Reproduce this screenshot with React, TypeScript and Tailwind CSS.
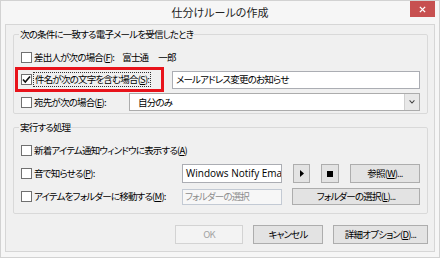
import type { ReactNode } from 'react'

const font = "font-['Noto_Sans_CJK_JP','Noto_Sans',sans-serif] [font-feature-settings:'palt']"

function Check({ checked = false }: { checked?: boolean }) {
  return (
    <span className="relative inline-block w-[11px] h-[11px] shrink-0 border border-[#707070] bg-white">
      {checked && (
        <svg viewBox="0 0 11 11" className="absolute -left-px -top-px w-[11px] h-[11px]">
          <path d="M2 5.5 L4.3 8 L9 2.5" fill="none" stroke="#111" strokeWidth="1.6" />
        </svg>
      )}
    </span>
  )
}

function Btn({ children, className = '', disabled = false }: { children: ReactNode; className?: string; disabled?: boolean }) {
  return (
    <div
      className={`flex items-center justify-center whitespace-nowrap border ${
        disabled ? 'border-[#d3d3d3] bg-[#f3f3f3] text-[#a3a3a3]' : 'border-[#adadad] bg-[#e3e3e3] text-black'
      } ${className}`}
    >
      {children}
    </div>
  )
}

function Group({ title, children, className = '' }: { title: string; children: ReactNode; className?: string }) {
  return (
    <fieldset className={`border border-[#d9d9d9] rounded-[2px] ${className}`}>
      <legend className="ml-[5px] px-px leading-[14px]">{title}</legend>
      {children}
    </fieldset>
  )
}

export default function App() {
  return (
    <div className={`w-[440px] h-[258px] flex flex-col bg-[#f6f6f6] border border-[#d2d2d2] text-[9.5px] tracking-[-0.8px] whitespace-nowrap text-black ${font}`}>
      {/* Title bar */}
      <div className="h-[23px] grid grid-cols-[1fr_auto_1fr] items-start">
        <div />
        <div className="pt-[4px] text-[11px] tracking-normal leading-[14px] text-[#222]">仕分けルールの作成</div>
        <div className="flex justify-end pr-[4px]">
          <div className="w-[25px] h-[16px] bg-[#c75050] flex items-center justify-center">
            <svg viewBox="0 0 8 8" className="w-[7px] h-[7px]">
              <path d="M1 1 L7 7 M7 1 L1 7" stroke="#fff" strokeWidth="1.6" />
            </svg>
          </div>
        </div>
      </div>

      {/* Client area */}
      <div className="flex-1 mx-[4px] mb-[5px] border border-[#d6d6d6] bg-[#f0f0f0] pl-[7px] pr-[6px] pt-[2px] flex flex-col">
        <Group title="次の条件に一致する電子メールを受信したとき" className="h-[87px]">
          <div className="flex flex-col pr-[7px]">
            <div className="mt-[7px] h-[18px] flex items-center pl-[7px] gap-[2px]">
              <Check />
              <span>
                差出人が次の場合(<u>F</u>):
              </span>
              <span className="ml-[6px]">富士通</span>
              <span className="ml-[8px]">一郎</span>
            </div>
            <div className="mt-px h-[25px] flex items-center pl-px">
              <div className="w-[149px] h-[25px] border-[3px] border-[#e8131b] flex items-center pl-[3px] gap-[1px]">
                <Check checked />
                <span className="border border-dotted border-[#333] leading-[13px] px-px">
                  件名が次の文字を含む場合(<u>S</u>):
                </span>
              </div>
              <div className="ml-[8px] flex-1 h-[18px] border border-[#abadb3] bg-white flex items-center pl-[3px]">
                メールアドレス変更のお知らせ
              </div>
            </div>
            <div className="mt-px h-[18px] flex items-center pl-[7px] gap-[2px]">
              <Check />
              <span className="w-[93px]">
                宛先が次の場合(<u>E</u>):
              </span>
              <div className="flex-1 h-[18px] border border-[#acacac] bg-white flex items-center">
                <span className="flex-1 pl-[8px]">自分のみ</span>
                <div className="w-[15px] h-[16px] border-l border-[#d0d0d0] bg-[#e8e8e8] flex items-center justify-center">
                  <svg viewBox="0 0 7 5" className="w-[6px] h-[4px]">
                    <path d="M0.5 0.5 L3.5 3.8 L6.5 0.5" fill="none" stroke="#444" strokeWidth="1.3" />
                  </svg>
                </div>
              </div>
            </div>
          </div>
        </Group>

        <Group title="実行する処理" className="mt-[6px] h-[94px]">
          <div className="flex flex-col pr-[7px] pl-[7px]">
            <div className="mt-[7px] h-[18px] flex items-center gap-[2px]">
              <Check />
              <span>
                新着アイテム通知ウィンドウに表示する(<u>A</u>)
              </span>
            </div>
            <div className="mt-[5px] h-[19px] flex items-center">
              <div className="w-[161px] flex items-center gap-[2px]">
                <Check />
                <span>
                  音で知らせる(<u>P</u>):
                </span>
              </div>
              <div className="w-[100px] h-[19px] border border-[#abadb3] bg-white flex items-center pl-[3px] overflow-hidden font-['Open_Sans',sans-serif] text-[10px] tracking-normal">
                Windows Notify Ema
              </div>
              <Btn className="ml-[11px] w-[17px] h-[19px]">
                <svg viewBox="0 0 4 7" className="w-[4px] h-[7px]">
                  <path d="M0 0 L4 3.5 L0 7 Z" fill="#000" />
                </svg>
              </Btn>
              <Btn className="ml-[11px] w-[18px] h-[19px]">
                <span className="w-[6px] h-[6px] bg-black" />
              </Btn>
              <Btn className="ml-[11px] flex-1 h-[19px]">
                参照(<u>W</u>)...
              </Btn>
            </div>
            <div className="mt-[5px] h-[17px] flex items-center">
              <div className="w-[161px] flex items-center gap-[2px]">
                <Check />
                <span>
                  アイテムをフォルダーに移動する(<u>M</u>):
                </span>
              </div>
              <div className="w-[100px] h-[16px] border border-[#c3cad4] bg-[#f7f7f7] text-[#8d8d8d] flex items-center pl-[2px]">
                フォルダーの選択
              </div>
              <Btn className="ml-[10px] flex-1 h-[17px]">
                フォルダーの選択(<u>L</u>)...
              </Btn>
            </div>
          </div>
        </Group>

        <div className="mt-[11px] flex justify-end gap-[10px]">
          <Btn disabled className="w-[68px] h-[19px]">
            OK
          </Btn>
          <Btn className="w-[70px] h-[19px]">キャンセル</Btn>
          <Btn className="w-[95px] h-[19px]">
            詳細オプション(<u>D</u>)...
          </Btn>
        </div>
      </div>
    </div>
  )
}
